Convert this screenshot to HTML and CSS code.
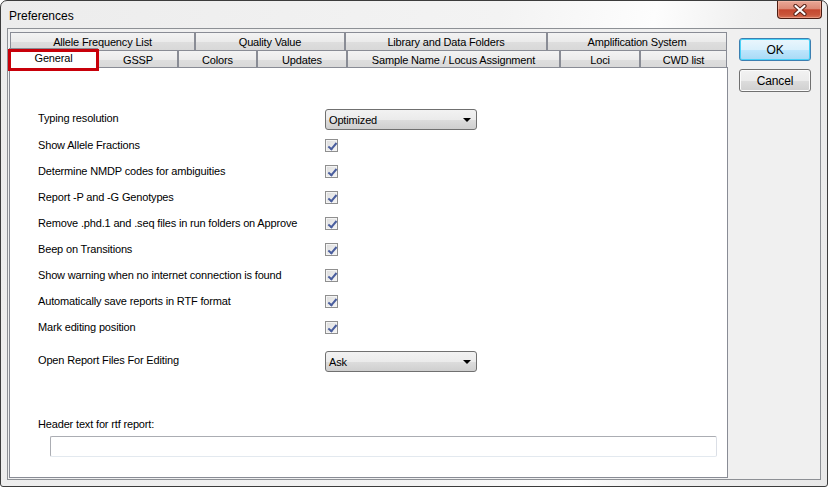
FILE: index.html
```html
<!DOCTYPE html>
<html lang="en">
<head>
    <meta charset="UTF-8">
    <title>Preferences</title>
    <link rel="stylesheet" href="styles.css">
</head>
<body>
    <div class="window">
        <div class="titlebar">
            <span class="title">Preferences</span>
            <div class="close-btn">
                <svg width="16" height="12" viewBox="0 0 16 12">
                    <path d="M3.5 2 L12.5 10 M12.5 2 L3.5 10" stroke="#5a2418" stroke-width="4.2" stroke-linecap="round"/>
                    <path d="M3.5 2 L12.5 10 M12.5 2 L3.5 10" stroke="#ffffff" stroke-width="2.2" stroke-linecap="round"/>
                </svg>
            </div>
        </div>
        <div class="client">
            <div class="tabs">
                <div class="tab-row back">
                    <div class="tab w184">Allele Frequency List</div>
                    <div class="tab w149">Quality Value</div>
                    <div class="tab w202">Library and Data Folders</div>
                    <div class="tab w181">Amplification System</div>
                </div>
                <div class="tab-row front">
                    <div class="tab selected w89">General</div>
                    <div class="tab w80">GSSP</div>
                    <div class="tab w79">Colors</div>
                    <div class="tab w90">Updates</div>
                    <div class="tab w213">Sample Name / Locus Assignment</div>
                    <div class="tab w80">Loci</div>
                    <div class="tab w87">CWD list</div>
                </div>
                <div class="panel">
                    <div class="row combo-row">
                        <span class="label">Typing resolution</span>
                        <div class="combo">Optimized</div>
                    </div>
                    <div class="row">
                        <span class="label">Show Allele Fractions</span>
                        <span class="check"></span>
                    </div>
                    <div class="row">
                        <span class="label">Determine NMDP codes for ambiguities</span>
                        <span class="check"></span>
                    </div>
                    <div class="row">
                        <span class="label">Report -P and -G Genotypes</span>
                        <span class="check"></span>
                    </div>
                    <div class="row">
                        <span class="label">Remove .phd.1 and .seq files in run folders on Approve</span>
                        <span class="check"></span>
                    </div>
                    <div class="row">
                        <span class="label">Beep on Transitions</span>
                        <span class="check"></span>
                    </div>
                    <div class="row">
                        <span class="label">Show warning when no internet connection is found</span>
                        <span class="check"></span>
                    </div>
                    <div class="row">
                        <span class="label">Automatically save reports in RTF format</span>
                        <span class="check"></span>
                    </div>
                    <div class="row">
                        <span class="label">Mark editing position</span>
                        <span class="check"></span>
                    </div>
                    <div class="row combo-row spaced">
                        <span class="label">Open Report Files For Editing</span>
                        <div class="combo">Ask</div>
                    </div>
                    <div class="header-label">Header text for rtf report:</div>
                    <div class="header-input"></div>
                </div>
            </div>
            <div class="buttons">
                <div class="btn default">OK</div>
                <div class="btn">Cancel</div>
            </div>
        </div>
    </div>
</body>
</html>
```

FILE: styles.css
```css
body {
    margin: 0;
    font-family: "Liberation Sans", Arial, sans-serif;
    font-size: 11px;
    letter-spacing: -0.16px;
    color: #000;
    background: #fff;
}
.window {
    width: 828px;
    height: 487px;
    box-sizing: border-box;
    border: 1px solid #3c3c3c;
    border-radius: 7px 7px 3px 3px;
    padding: 0 6px 6px 6px;
    display: flex;
    flex-direction: column;
    background: linear-gradient(100deg, #ececec 0%, #f3f3f3 55%, #fdfdfd 72%, #f0f0f0 82%, #e8e8e8 100%);
}
.titlebar {
    height: 27px;
    display: flex;
    align-items: flex-start;
}
.title {
    font-size: 12px;
    letter-spacing: 0;
    margin: 8px 0 0 2px;
}
.close-btn {
    margin-left: auto;
    margin-right: -1px;
    width: 45px;
    height: 18px;
    box-sizing: border-box;
    border: 1px solid #4a1c12;
    border-top: none;
    border-radius: 0 0 4px 4px;
    background: linear-gradient(#e9a897 0%, #dc8a76 45%, #c5472f 52%, #c9553a 80%, #d7745a 100%);
    box-shadow: inset 0 0 0 1px rgba(255, 200, 180, 0.45);
    display: flex;
    align-items: center;
    justify-content: center;
}
.client {
    flex: 1;
    border: 1px solid #8d9095;
    background: #f0f0f0;
    display: flex;
}
.tabs {
    width: 719px;
    margin-left: 1px;
    padding-top: 3px;
    padding-bottom: 1px;
    display: flex;
    flex-direction: column;
}
.tab-row {
    display: flex;
    height: 18px;
}
.tab-row.back {
    margin-left: 1px;
}
.tab {
    box-sizing: border-box;
    height: 18px;
    border: 1px solid #898c95;
    border-bottom: none;
    background: linear-gradient(#f3f3f3 0%, #ebebeb 50%, #dedede 51%, #d8d8d8 100%);
    display: flex;
    align-items: center;
    justify-content: center;
    padding-top: 1px;
}
.tab-row.front .tab.selected {
    position: relative;
    z-index: 2;
    height: 21px;
    margin-top: -2px;
    padding: 0 0 2px;
    background: #fff;
}
.tab.selected::after {
    content: "";
    position: absolute;
    left: -2px;
    right: -2px;
    top: 0;
    bottom: -2px;
    border: 3px solid #c8000a;
}
.w184 { width: 185px; }
.w149 { width: 150px; }
.w202 { width: 202px; }
.w181 { width: 180px; }
.w89 { width: 89px; }
.w80 { width: 80px; }
.w79 { width: 79px; }
.w90 { width: 90px; }
.w213 { width: 213px; }
.w87 { width: 87px; }
.panel {
    flex: 1;
    margin-top: -1px;
    border: 1px solid #898c95;
    background: #fff;
    padding: 38px 0 0 28px;
}
.row {
    height: 26px;
    display: flex;
    align-items: center;
}
.row.spaced {
    margin-top: 8px;
}
.label {
    width: 287px;
}
.combo-row .label {
    margin-top: -2px;
}
.combo {
    position: relative;
    width: 152px;
    height: 21px;
    box-sizing: border-box;
    border: 1px solid #707070;
    border-radius: 3px;
    background: linear-gradient(#f2f2f2 0%, #ebebeb 50%, #dddddd 51%, #cfcfcf 100%);
    padding: 4px 0 0 3px;
}
.combo::after {
    content: "";
    position: absolute;
    right: 5px;
    top: 8px;
    border-left: 4px solid transparent;
    border-right: 4px solid transparent;
    border-top: 4px solid #000;
}
.check {
    position: relative;
    width: 13px;
    height: 13px;
    box-sizing: border-box;
    border: 1px solid #8f8f8f;
    background: linear-gradient(135deg, #dcdcdc, #f6f6f6);
    box-shadow: inset 0 0 0 1px #f4f4f4;
}
.check::after {
    content: "";
    position: absolute;
    left: 4px;
    top: 1px;
    width: 3px;
    height: 7px;
    border-right: 2px solid #4a5e9e;
    border-bottom: 2px solid #4a5e9e;
    transform: rotate(40deg);
}
.header-label {
    margin-top: 44px;
    line-height: 13px;
}
.header-input {
    width: 667px;
    height: 21px;
    box-sizing: border-box;
    margin: 5px 0 0 12px;
    border: 1px solid #abadb3;
    border-right-color: #dbdfe6;
    border-bottom-color: #e3e9ef;
    border-radius: 2px;
    background: #fff;
}
.buttons {
    margin-left: 11px;
    padding-top: 9px;
    display: flex;
    flex-direction: column;
    gap: 8px;
}
.btn {
    width: 72px;
    height: 23px;
    box-sizing: border-box;
    border: 1px solid #707070;
    border-radius: 3px;
    background: linear-gradient(#f2f2f2 0%, #ebebeb 50%, #dddddd 51%, #cfcfcf 100%);
    box-shadow: inset 0 0 0 1px #fbfbfb;
    display: flex;
    align-items: center;
    justify-content: center;
    font-size: 12px;
}
.btn.default {
    border-color: #3c7fb1;
    background: linear-gradient(#eaf6fd 0%, #d9f0fc 50%, #bee6fd 51%, #a7d9f5 100%);
    box-shadow: inset 0 0 0 1px #48d2f8;
}
```
